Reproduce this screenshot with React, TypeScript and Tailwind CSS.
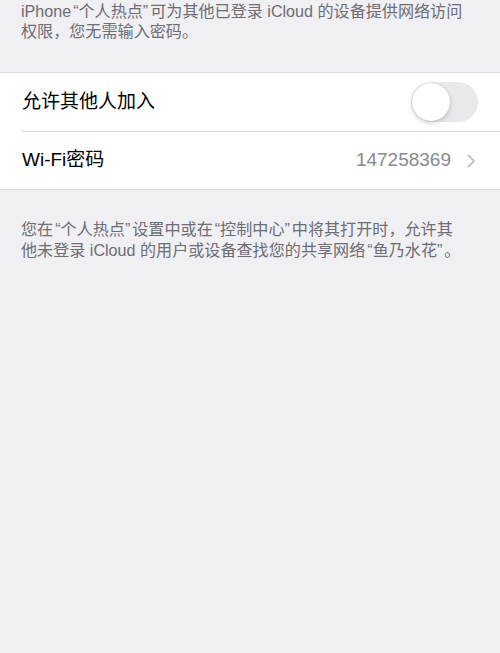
const font = { fontFamily: '"Liberation Sans", "Noto Sans CJK SC", sans-serif' };

// 引号两侧留一点空，贴近 iOS 的排版
const L = () => <span className="pl-[2px]">“</span>;
const R = () => <span className="pr-[2px]">”</span>;

function Toggle() {
  return (
    <div className="relative w-[67px] h-[40px] rounded-full bg-[#e9e9ec]">
      <div className="absolute left-[1px] top-[1px] w-[38px] h-[38px] rounded-full bg-white shadow-[0_2px_5px_rgba(0,0,0,0.18),0_0_1px_rgba(0,0,0,0.15)]" />
    </div>
  );
}

export default function App() {
  return (
    <div className="min-h-[653px] bg-[#efeff4] text-black" style={font}>
      {/* 顶部说明 */}
      <div className="px-[21px] pt-[1px] text-[16.1px] leading-[20px] text-[#6d6d72] whitespace-nowrap">
        iPhone<L />个人热点<R />可为其他已登录 iCloud 的设备提供网络访问
        <br />
        权限，您无需输入密码。
      </div>

      {/* 设置列表 */}
      <div className="mt-[31px] bg-white border-y border-[#d9d9dd]">
        <div className="flex items-center justify-between h-[58px] pl-[22px] pr-[22px]">
          <span className="text-[19px]">允许其他人加入</span>
          <Toggle />
        </div>
        <div className="ml-[21px] h-px bg-[#dcdce0]" />
        <div className="flex items-center justify-between h-[57px] pl-[22px] pr-[24px]">
          <span className="text-[19px]">Wi-Fi密码</span>
          <div className="flex items-center gap-[16px]">
            <span className="text-[19px] text-[#8a8a8e]">147258369</span>
            <svg width="9" height="14" viewBox="0 0 9 14" fill="none">
              <path d="M1.5 1.5L7 7L1.5 12.5" stroke="#c4c4c8" strokeWidth="2" strokeLinecap="round" strokeLinejoin="round" />
            </svg>
          </div>
        </div>
      </div>

      {/* 底部说明 */}
      <div className="px-[21px] pt-[29px] text-[16.1px] leading-[21px] text-[#6d6d72] whitespace-nowrap">
        您在<L />个人热点<R />设置中或在<L />控制中心<R />中将其打开时，允许其
        <br />
        他未登录 iCloud 的用户或设备查找您的共享网络<L />鱼乃水花<R />。
      </div>
    </div>
  );
}
